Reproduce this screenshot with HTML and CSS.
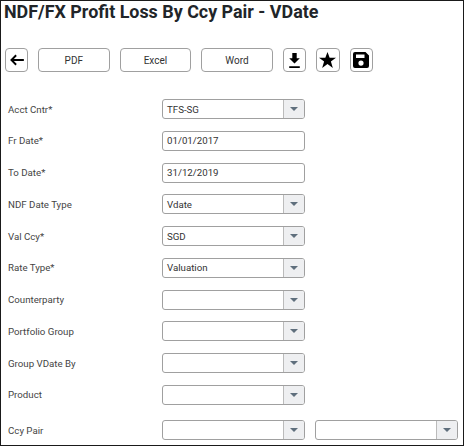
FILE: index.html
```html
<!DOCTYPE html>
<html lang="en">

<head>
    <meta charset="UTF-8">
    <title>NDF/FX Profit Loss By Ccy Pair - VDate</title>
    <link rel="stylesheet" href="styles.css">
</head>

<body>
    <main class="window">
        <h1 class="title">NDF/FX Profit Loss By Ccy Pair - VDate</h1>
        <div class="toolbar">
            <button class="btn btn-icon btn-back" title="Back">
                <svg width="16" height="12" viewBox="0 0 18 14"><path d="M17 7H3M8 1.500 2.500 7 8 12.500" fill="none" stroke="#000" stroke-width="2.200"/></svg>
            </button>
            <button class="btn btn-text">PDF</button>
            <button class="btn btn-text">Excel</button>
            <button class="btn btn-text">Word</button>
            <button class="btn btn-icon" title="Download">
                <svg width="13" height="15" viewBox="0 0 14 17"><path d="M4.500 0h5v6H13L7 12 1 6h3.500z" fill="#000"/><path d="M1 15h12v2H1z" fill="#000"/></svg>
            </button>
            <button class="btn btn-icon" title="Favourite">
                <svg width="17" height="16" viewBox="0 0 18 17"><path d="M9 0l2.300 6H18l-5.400 4 2.100 7L9 12.800 3.300 17l2.100-7L0 6h6.700z" fill="#000"/></svg>
            </button>
            <button class="btn btn-icon" title="Save">
                <svg width="16" height="16" viewBox="0 0 16 16"><path fill-rule="evenodd" d="M2 0h10.500L16 3.500V14a2 2 0 0 1-2 2H2a2 2 0 0 1-2-2V2a2 2 0 0 1 2-2zM3 2.500v3.500h8.500V2.500zM8 8.500a2.600 2.600 0 1 0 0 5.200 2.600 2.600 0 0 0 0-5.200z" fill="#000"/></svg>
            </button>
        </div>
        <form class="form">
            <label class="form-label">Acct Cntr*</label>
            <div class="combo"><span class="combo-value">TFS-SG</span><span class="combo-arrow"></span></div>

            <label class="form-label">Fr Date*</label>
            <div class="date-input">01/01/2017</div>

            <label class="form-label">To Date*</label>
            <div class="date-input">31/12/2019</div>

            <label class="form-label">NDF Date Type</label>
            <div class="combo"><span class="combo-value">Vdate</span><span class="combo-arrow"></span></div>

            <label class="form-label">Val Ccy*</label>
            <div class="combo"><span class="combo-value">SGD</span><span class="combo-arrow"></span></div>

            <label class="form-label">Rate Type*</label>
            <div class="combo"><span class="combo-value">Valuation</span><span class="combo-arrow"></span></div>

            <label class="form-label">Counterparty</label>
            <div class="combo"><span class="combo-value"></span><span class="combo-arrow"></span></div>

            <label class="form-label">Portfolio Group</label>
            <div class="combo"><span class="combo-value"></span><span class="combo-arrow"></span></div>

            <label class="form-label">Group VDate By</label>
            <div class="combo"><span class="combo-value"></span><span class="combo-arrow"></span></div>

            <label class="form-label">Product</label>
            <div class="combo"><span class="combo-value"></span><span class="combo-arrow"></span></div>

            <label class="form-label form-label-last">Ccy Pair</label>
            <div class="combo combo-last"><span class="combo-value"></span><span class="combo-arrow"></span></div>
            <div class="combo combo-last"><span class="combo-value"></span><span class="combo-arrow"></span></div>
        </form>
    </main>
</body>

</html>
```

FILE: styles.css
```css
html,
body {
    margin: 0;
    height: 100%;
    background-color: white;
    overflow: hidden;
}

.window {
    box-sizing: border-box;
    width: 464px;
    height: 446px;
    border: 1px solid #1a1a1a;
    font-family: Roboto, sans-serif;
    color: #333;
    overflow: hidden;
}

.title {
    margin: 0;
    padding-left: 3px;
    font-size: 17.900px;
    line-height: 22px;
    font-weight: bold;
    color: #212529;
}

.toolbar {
    display: flex;
    gap: 10px;
    margin-top: 25px;
    padding-left: 4px;
}

.btn {
    box-sizing: border-box;
    height: 24px;
    padding: 0;
    border: 1px solid #a0a0a0;
    border-radius: 4px;
    background-color: white;
    font-family: inherit;
    font-size: 10px;
    color: #333;
    display: flex;
    align-items: center;
    justify-content: center;
}

.btn-text {
    width: 71.600px;
}

.btn-icon {
    width: 23.400px;
}

.btn-back {
    width: 23px;
}

.form {
    display: grid;
    grid-template-columns: 144px 143px 143px;
    grid-auto-rows: 20px;
    column-gap: 10px;
    row-gap: 11.750px;
    margin-top: 27px;
    padding-left: 7px;
    font-size: 9.700px;
}

.form-label {
    grid-column: 1;
    align-self: center;
    color: #444;
}

.form-label-last {
    margin-top: 7px;
}

.combo,
.date-input {
    grid-column: 2;
    box-sizing: border-box;
    height: 20px;
    border: 1px solid #a0a0a0;
    border-radius: 3px;
    display: flex;
    align-items: center;
    background-color: white;
    color: #333;
}

.combo-last {
    margin-top: 3px;
}

.combo-last + .combo-last {
    grid-column: 3;
}

.combo-value {
    flex: 1;
    padding-left: 4px;
}

.date-input {
    padding-left: 4px;
}

.combo-arrow {
    box-sizing: border-box;
    width: 21px;
    height: 100%;
    border-left: 1px solid #bbb;
    background-color: #eeeff1;
    border-radius: 0 2px 2px 0;
    display: flex;
    align-items: center;
    justify-content: center;
}

.combo-arrow::after {
    content: "";
    border: 4px solid transparent;
    border-top: 4px solid #5f6f7d;
    border-bottom: 0;
}
```
